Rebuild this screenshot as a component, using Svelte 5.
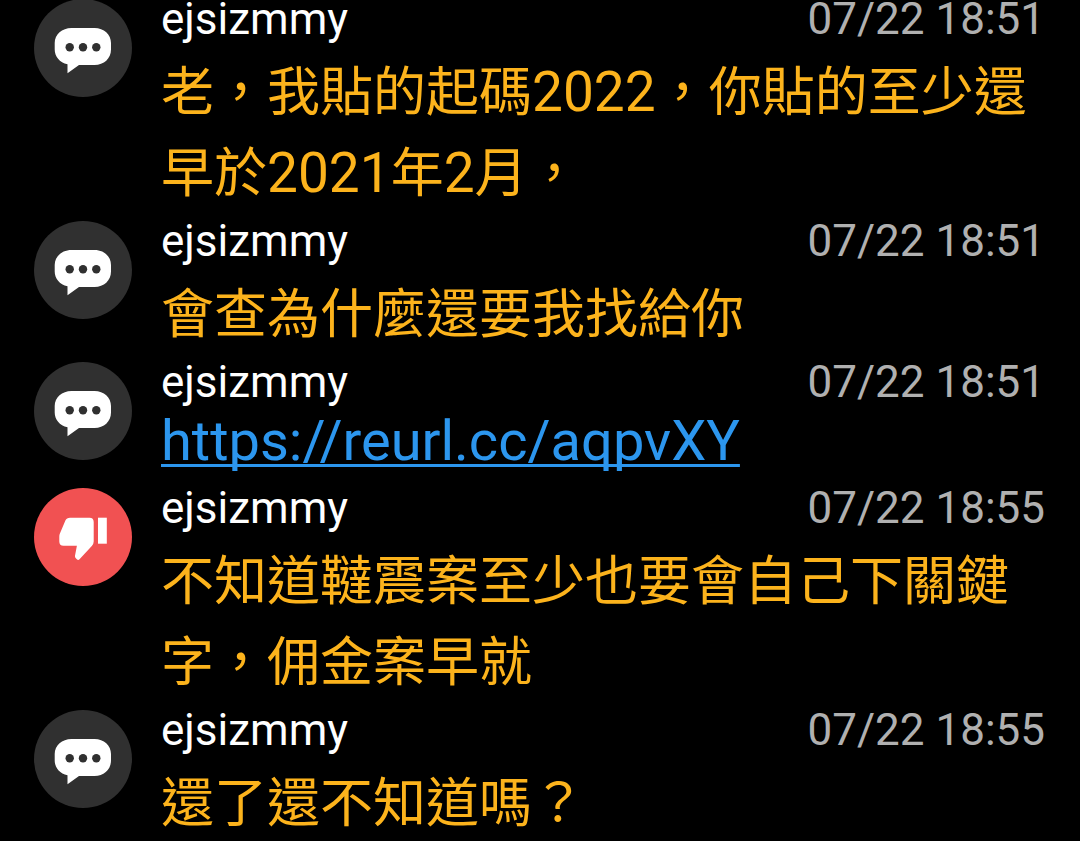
<script>
  const comments = [
    { kind: 'reply', user: 'ejsizmmy', time: '07/22 18:51', text: '老，我貼的起碼2022，你貼的至少還早於2021年2月，' },
    { kind: 'reply', user: 'ejsizmmy', time: '07/22 18:51', text: '會查為什麼還要我找給你' },
    { kind: 'reply', user: 'ejsizmmy', time: '07/22 18:51', link: 'https://reurl.cc/aqpvXY' },
    { kind: 'down', user: 'ejsizmmy', time: '07/22 18:55', text: '不知道韃震案至少也要會自己下關鍵字，佣金案早就' },
    { kind: 'reply', user: 'ejsizmmy', time: '07/22 18:55', text: '還了還不知道嗎？' },
  ];

  // Separates runs of digits from the Chinese text so each gets its own face.
  const runs = (text) => text.split(/(\d+)/).filter(Boolean);
</script>

<ul class="comments" lang="zh-Hant">
  {#each comments as c}
    <li class="comment">
      <svg class="badge" class:down={c.kind === 'down'} viewBox="0 0 98 98" aria-hidden="true">
        <circle class="disc" cx="49" cy="49" r="49" />
        {#if c.kind === 'down'}
          <path
            fill="#fff"
            d="M36 29.7H55.500Q59.700 29.700 59.700 34V53.500Q59.700 56 57.800 57.900L45.500 71.300Q44.200 72.600 42.800 71.300L41.600 70Q40.800 69 41 67.800L42.900 57.700H29.500Q25.300 57.700 25.300 53.500V48.500Q25.300 47 25.800 45.800L31.500 32.300Q32.600 29.700 36 29.700Z"
          />
          <rect fill="#fff" x="64" y="29.700" width="8.800" height="26" />
        {:else}
          <path
            fill="#fff"
            d="M37.500 29H60.500C70 29 77 35.500 77 44V50.500C77 59.500 70 66 60.500 66H45L33.500 74.300V65.300C25.500 63.500 20.700 57.500 20.700 50.500V44C20.700 35.500 28 29 37.500 29Z"
          />
          <circle class="disc" cx="35.700" cy="48.300" r="4.200" />
          <circle class="disc" cx="49" cy="48.300" r="4.200" />
          <circle class="disc" cx="62.300" cy="48.300" r="4.200" />
        {/if}
      </svg>
      <div class="content">
        <div class="head">
          <span class="user">{c.user}</span>
          <time>{c.time}</time>
        </div>
        {#if c.link}
          <a class="link" href={c.link}>{c.link}</a>
        {:else}
          <p class="text">{#each runs(c.text) as run}{#if /\d/.test(run)}<span class="digits">{run}</span>{:else}{run}{/if}{/each}</p>
        {/if}
      </div>
    </li>
  {/each}
</ul>

<style>
  :global(body) {
    margin: 0;
    background: #000;
  }
  .comments {
    list-style: none;
    margin: -1px 0 0;
    padding: 0 35px 0 34px;
    font-family: Roboto, 'Noto Sans CJK TC', sans-serif;
  }
  .comment {
    display: flex;
    gap: 29px;
    padding-bottom: 11px;
  }
  .comment:last-child {
    padding-bottom: 0;
  }
  .badge {
    flex: none;
    width: 98px;
    height: 98px;
  }
  .disc {
    fill: #303030;
  }
  .down .disc {
    fill: #f15152;
  }
  .content {
    flex: 1;
    min-width: 0;
  }
  .head {
    display: flex;
    justify-content: space-between;
    margin-bottom: 9px;
    font-size: 44px;
    line-height: 40px;
  }
  .user {
    color: #fff;
  }
  time {
    color: #b0b0b0;
  }
  .text {
    margin: 0;
    font-family: 'Noto Sans CJK TC', sans-serif;
    font-size: 53px;
    line-height: 81px;
    color: #fcb31c;
  }
  .digits {
    font-family: Roboto, sans-serif;
    font-size: 55px;
    line-height: 1;
  }
  .link {
    display: block;
    width: fit-content;
    padding-bottom: 6px;
    font-size: 56px;
    line-height: 60px;
    color: #2c96ee;
    text-decoration: underline;
    text-decoration-thickness: 3px;
    text-decoration-skip-ink: none;
    text-underline-offset: 4px;
  }
</style>
